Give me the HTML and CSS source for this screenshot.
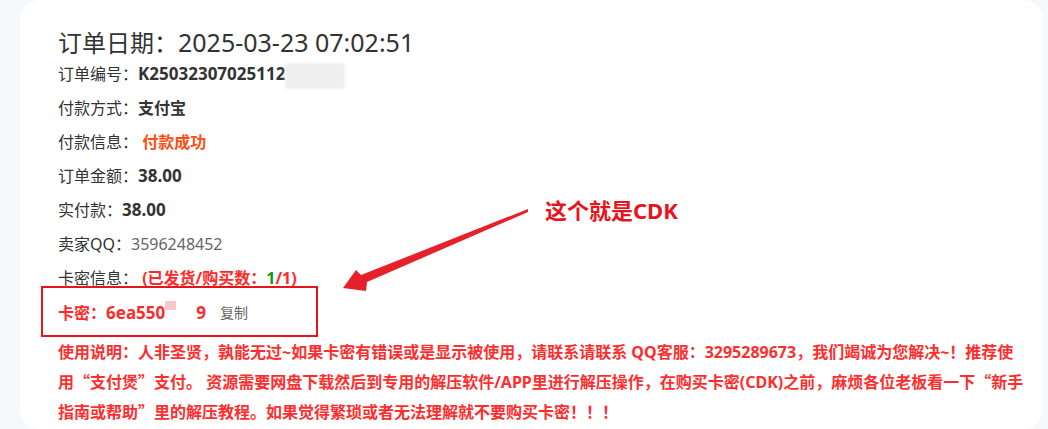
FILE: index.html
```html
<!DOCTYPE html>
<html lang="zh-CN">
<head>
    <meta charset="UTF-8">
    <meta name="viewport" content="width=device-width, initial-scale=1.0">
    <title>订单详情</title>
    <link rel="stylesheet" href="styles.css">
</head>
<body>
    <div class="card">
        <h2 class="orderDate">订单日期：<span class="date">2025-03-23 07:02:51</span></h2>
        <ul class="info">
            <li>订单编号：<b class="val">K25032307025112</b><span class="mask"></span></li>
            <li>付款方式：<b class="val cn">支付宝</b></li>
            <li>付款信息： <b class="ok">付款成功</b></li>
            <li>订单金额：<b class="val">38.00</b></li>
            <li>实付款：<b class="val">38.00</b></li>
            <li>卖家QQ：<span class="qq">3596248452</span></li>
            <li>卡密信息： <b class="sent">(已发货/购买数：<i class="green">1</i>/1)</b></li>
        </ul>
        <!-- 卡密 -->
        <div class="cdkBox">
            <b class="cdk">卡密：<span class="code">6ea550</span><span class="pink"></span><span class="code">9</span></b>
            <span class="copy">复制</span>
        </div>
        <p class="notice">使用说明：人非圣贤，孰能无过~如果卡密有错误或是显示被使用，请联系请联系 QQ客服：3295289673，我们竭诚为您解决~！推荐使用<span class="q">“</span>支付煲<span class="q">”</span>支付。 资源需要网盘下载然后到专用的解压软件/APP里进行解压操作，在购买卡密(CDK)之前，麻烦各位老板看一下<span class="q">“</span>新手指南或帮助<span class="q">”</span>里的解压教程。如果觉得繁琐或者无法理解就不要购买卡密！！！</p>

        <svg class="arrow" width="210" height="100" viewBox="330 200 210 100">
            <polygon points="343,288 356,270 361,275 528,209 528,212 367,282 366,291" fill="#e62129"/>
        </svg>
        <div class="tip">这个就是CDK</div>
    </div>
</body>
</html>
```

FILE: styles.css
```css
body{margin: 0;background: #f7f8fc;font-family: "Noto Sans", "Noto Sans CJK SC", sans-serif;color: #333;}
.card{position: relative;margin-left: 20px;width: 1023px;height: 429px;box-sizing: border-box;padding: 28px 18px 0 38px;background: #fff;border-radius: 20px;}
.orderDate{margin: 0;font-size: 24px;line-height: 28px;font-weight: normal;color: #333;}
.date{font-size: 25px;}
.info{margin: 0;padding: 0;list-style: none;font-size: 16px;}
.info li{height: 34px;line-height: 34px;}
.val{font-size: 17px;font-weight: bold;color: #333;}
.val.cn{font-size: 16px;}
.mask{display: inline-block;width: 60px;height: 26px;vertical-align: middle;background: #efefef;filter: blur(1.5px);}
.ok{color: #ff4d12;}
.sent{color: #ff2b2b;}
.green{font-style: normal;color: #169616;}
.qq{color: #666;}
.cdkBox{display: flex;align-items: center;width: 277px;height: 51px;box-sizing: border-box;margin: -9px 0 0 -17px;padding-left: 15px;border: 2px solid #e8141c;}
.cdk{font-size: 16px;color: #ff2b2b;}
.code{font-size: 17px;}
.pink{display: inline-block;width: 11px;height: 9px;margin-right: 20px;vertical-align: 9px;background: #f7c9cb;}
.copy{margin-left: 14px;font-size: 14px;color: #666;}
.notice{margin: 1px 0 0;font-size: 16px;line-height: 29px;font-weight: bold;color: #ff2e2e;}
.notice .q{font-family: "Noto Sans CJK SC", sans-serif;}
.arrow{position: absolute;left: 310px;top: 200px;}
.tip{position: absolute;left: 525px;top: 195px;font-size: 22px;line-height: 30px;font-weight: bold;color: #e8141c;}
```
